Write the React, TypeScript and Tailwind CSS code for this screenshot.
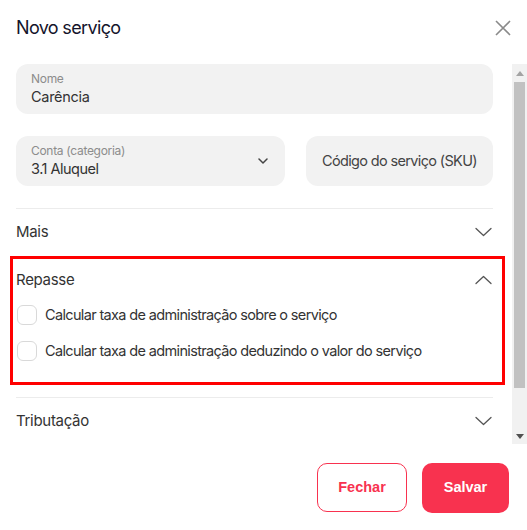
import { useState } from "react";

const font = { fontFamily: "Inter, 'Noto Sans', sans-serif" };
const buttonFont = { fontFamily: "'Liberation Sans', Arial, sans-serif" };

function Chevron({ up = false }: { up?: boolean }) {
  return (
    <svg width="17" height="10" viewBox="0 0 17 10" fill="none" className="text-[#555]">
      <path
        d={up ? "M1 8.5 L8.5 1.5 L16 8.5" : "M1 1.5 L8.5 8.5 L16 1.5"}
        stroke="currentColor"
        strokeWidth="1.3"
        strokeLinecap="round"
        strokeLinejoin="round"
      />
    </svg>
  );
}

function Checkbox({ label }: { label: string }) {
  const [checked, setChecked] = useState(false);
  return (
    <label className="flex items-center gap-[8px] h-9 cursor-pointer">
      <span
        onClick={() => setChecked(!checked)}
        className="w-5 h-5 rounded-md border border-[#d9d9d9] bg-white ml-px"
      />
      <span className="text-[14.5px] text-[#333] tracking-[-0.65px]">{label}</span>
    </label>
  );
}

// Barre de défilement dessinée (style classique)
function Scrollbar() {
  return (
    <div className="w-[15px] h-full bg-[#f1f1f1] flex flex-col items-center">
      <div className="h-[18px] flex items-center justify-center">
        <svg width="8" height="5" viewBox="0 0 8 5">
          <path d="M0 5 L4 0 L8 5 Z" fill="#a3a3a3" />
        </svg>
      </div>
      <div className="w-[11px] h-[306px] bg-[#c1c1c1]" />
      <div className="flex-1 flex items-end justify-center pb-[5px]">
        <svg width="8" height="5" viewBox="0 0 8 5">
          <path d="M0 0 L8 0 L4 5 Z" fill="#505050" />
        </svg>
      </div>
    </div>
  );
}

export default function App() {
  return (
    <div className="w-[527px] h-[530px] bg-white flex flex-col" style={font}>
      {/* En-tête */}
      <div className="h-16 flex items-start justify-between pl-4 pr-4 pt-[16px]">
        <h2 className="text-[18px] text-[#14142b] tracking-[-0.65px] leading-6">Novo serviço</h2>
        <svg width="16" height="16" viewBox="0 0 16 16" className="mt-[4px]">
          <path d="M1 1 L15 15 M15 1 L1 15" stroke="#8a8a8a" strokeWidth="1.6" />
        </svg>
      </div>

      {/* Contenu défilant */}
      <div className="h-[380px] flex">
        <div className="flex-1 overflow-hidden">
          <div className="relative pl-4 pr-[19px] pb-[36px]">
            <div className="h-[50px] rounded-xl bg-[#f2f2f2] px-[15px] flex flex-col justify-center">
              <span className="text-[12px] text-[#8c8c8c] leading-4 tracking-[-0.3px]">Nome</span>
              <span className="text-[14.5px] text-[#333] leading-5 tracking-[-0.3px]">Carência</span>
            </div>

            <div className="mt-[22px] flex gap-[21px]">
              <div className="w-[269px] h-[50px] rounded-xl bg-[#f2f2f2] pl-[15px] pr-[17px] flex items-center justify-between">
                <div className="flex flex-col">
                  <span className="text-[12px] text-[#8c8c8c] leading-4 tracking-[-0.3px]">Conta (categoria)</span>
                  <span className="text-[14.5px] text-[#333] leading-5 tracking-[-0.5px]">3.1 Aluquel</span>
                </div>
                <svg width="10" height="6" viewBox="0 0 10 6" fill="none">
                  <path d="M1 1 L5 5 L9 1" stroke="#444" strokeWidth="1.5" strokeLinecap="round" strokeLinejoin="round" />
                </svg>
              </div>
              <div className="flex-1 h-[50px] rounded-xl bg-[#f2f2f2] flex items-center justify-center">
                <span className="text-[14.5px] text-[#444] tracking-[-0.65px]">Código do serviço (SKU)</span>
              </div>
            </div>

            <div className="mt-[22px] border-t border-[#ececec]" />
            <div className="h-12 flex items-center justify-between pr-[1px] pb-[2px]">
              <span className="text-[15px] text-[#333] tracking-[-0.3px]">Mais</span>
              <Chevron />
            </div>

            <div className="h-12 flex items-center justify-between pr-[1px] pb-[2px]">
              <span className="text-[15px] text-[#333] tracking-[-0.3px]">Repasse</span>
              <Chevron up />
            </div>
            <div className="-mt-[8px]">
              <Checkbox label="Calcular taxa de administração sobre o serviço" />
              <Checkbox label="Calcular taxa de administração deduzindo o valor do serviço" />
            </div>

            <div className="mt-[28px] border-t border-[#ececec]" />
            <div className="h-12 flex items-center justify-between pr-[1px] pb-[2px]">
              <span className="text-[15px] text-[#333] tracking-[-0.3px]">Tributação</span>
              <Chevron />
            </div>

            {/* Cadre d'annotation */}
            <div className="absolute left-[10px] top-[192px] w-[495px] h-[129px] border-[3px] border-[#ff0000] pointer-events-none" />
          </div>
        </div>
        <Scrollbar />
      </div>

      {/* Actions */}
      <div className="flex justify-end gap-[15px] pr-[18px] pt-[19px]">
        <button
          className="w-[90px] h-[49px] rounded-[10px] border border-[#f8324f] text-[#f8324f] text-[14.5px] font-bold bg-white"
          style={buttonFont}
        >
          Fechar
        </button>
        <button
          className="w-[87px] h-[50px] rounded-[10px] bg-[#f8324f] text-white text-[14.5px] font-bold"
          style={buttonFont}
        >
          Salvar
        </button>
      </div>
    </div>
  );
}
